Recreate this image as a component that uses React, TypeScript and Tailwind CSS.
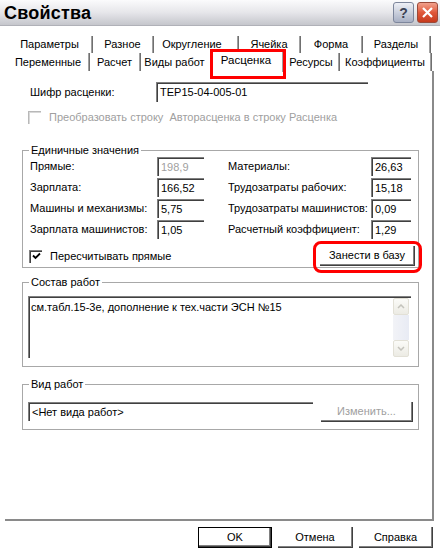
import React from "react";

const sunken =
  "bg-white border-t border-l border-t-[#808080] border-l-[#808080] shadow-[inset_1px_1px_0_#404040]";
const raised =
  "bg-white border-r border-b border-r-[#404040] border-b-[#404040] shadow-[inset_-1px_-1px_0_#808080]";

function Tab({ label, className, text = "", sep = true }: { label: string; className: string; text?: string; sep?: boolean }) {
  return (
    <div className={"flex h-full " + className}>
      <div className={"flex flex-1 items-center justify-center " + text}>{label}</div>
      {sep ? <div className="w-[2px] h-full border-l border-l-[#a0a0a0] border-r border-r-[#707070]" /> : <div className="w-[2px]" />}
    </div>
  );
}

function Edit({ value, className, disabled = false }: { value: string; className: string; disabled?: boolean }) {
  return (
    <div className={sunken + " flex items-center pl-[3px] " + className + (disabled ? " text-[#a0a0a0]" : " text-black")}>
      {value}
    </div>
  );
}

function Row({ l1, v1, l2, v2, d1 = false }: { l1: string; v1: string; l2: string; v2: string; d1?: boolean }) {
  return (
    <div className="flex h-[19px] items-center">
      <div className="w-[134px] pl-[7px]">{l1}</div>
      <Edit value={v1} className="w-[47px] h-[19px]" disabled={d1} />
      <div className="w-[24px]" />
      <div className="w-[143px]">{l2}</div>
      <Edit value={v2} className="w-[40px] h-[19px]" />
    </div>
  );
}

function Checkbox({ checked, disabled }: { checked?: boolean; disabled?: boolean }) {
  return (
    <div
      className={
        "w-[13px] h-[13px] bg-white flex items-center justify-center " +
        (disabled
          ? "border-t border-l border-t-[#b8b8b8] border-l-[#b8b8b8] shadow-[inset_1px_1px_0_#d8d8d8]"
          : "border-t border-l border-t-[#808080] border-l-[#808080] shadow-[inset_1px_1px_0_#404040]")
      }
    >
      {checked && (
        <svg width="9" height="9" viewBox="0 0 9 9">
          <path d="M1 3.5 L3.5 6 L8 1.5" stroke="#000" strokeWidth="1.8" fill="none" />
        </svg>
      )}
    </div>
  );
}

export default function App() {
  return (
    <div className="w-[440px] h-[558px] bg-white overflow-hidden font-['Liberation_Sans',Arial,sans-serif] text-[11px] text-black leading-none">
      {/* title bar */}
      <div className="h-[26px] flex items-center justify-between bg-gradient-to-b from-[#fbfbfc] via-[#e6e6ea] to-[#c5c6cc] border-b border-b-[#b0b1b8]">
        <div className="pl-[4px] text-[18px] font-bold tracking-[0.2px] text-black">Свойства</div>
        <div className="flex gap-[3px] pr-[2px]">
          <div className="w-[21px] h-[21px] rounded-[3px] border border-[#7d869c] bg-gradient-to-b from-[#eef0f6] to-[#a8b0c4] flex items-center justify-center text-[14px] font-bold text-[#3b4254]">
            ?
          </div>
          <div className="w-[21px] h-[21px] rounded-[3px] border border-[#9a4a3a] bg-gradient-to-b from-[#f0a08c] via-[#e0583a] to-[#c63a1c] flex items-center justify-center">
            <svg width="13" height="13" viewBox="0 0 13 13">
              <path d="M2 2 L11 11 M11 2 L2 11" stroke="#fff" strokeWidth="2.2" />
            </svg>
          </div>
        </div>
      </div>

      {/* tabs */}
      <div className="mt-[10px] pl-[8px]">
        <div className="flex h-[17px]">
          <Tab label="Параметры" className="w-[85px]" />
          <Tab label="Разное" className="w-[61px]" />
          <Tab label="Округление" className="w-[85px]" text="pr-[7px]" />
          <Tab label="Ячейка" className="w-[62px]" />
          <Tab label="Форма" className="w-[62px]" />
          <Tab label="Разделы" className="w-[68px]" />
        </div>
        <div className="flex h-[18px]">
          <Tab label="Переменные" className="w-[82px]" />
          <Tab label="Расчет" className="w-[51px]" />
          <Tab label="Виды работ" className="w-[69px]" sep={false} />
          <div className="relative flex w-[74px] -mt-[3px] h-[28px] bg-white">
            <div className="flex flex-1 items-start justify-center pt-[5px] text-[11.5px]">Расценка</div>
            <div className="w-[2px] h-[22px] border-l border-l-[#a0a0a0] border-r border-r-[#707070]" />
            <div className="absolute left-[0px] -right-[2px] -top-[1px] bottom-[-1px] border-[3px] border-[#ff0000]" />
          </div>
          <Tab label="Ресурсы" className="w-[56px]" />
          <Tab label="Коэффициенты" className="w-[92px]" />
        </div>
      </div>

      {/* panel */}
      <div className="ml-[5px] w-[429px] h-[450px] border-r-2 border-b-2 border-[#8a8a8a] pl-[17px] flex flex-col">
        <div className="mt-[11px] flex h-[20px] items-center">
          <div className="w-[134px] pl-[8px]">Шифр расценки:</div>
          <Edit value="ТЕР15-04-005-01" className="w-[212px] h-[20px]" />
        </div>
        <div className="mt-[8px] flex h-[14px] items-center pl-[6px] text-[#a0a0a0]">
          <Checkbox disabled />
          <span className="ml-[8px]">Преобразовать строку&nbsp; Авторасценка в строку Расценка</span>
        </div>

        {/* group 1 */}
        <div className="relative mt-[26px] w-[397px] h-[118px] border border-[#a8a8a8]">
          <div className="absolute -top-[6px] left-[6px] bg-white px-[2px]">Единичные значения</div>
          <div className="mt-[6px] flex flex-col gap-[2px]">
            <Row l1="Прямые:" v1="198,9" d1 l2="Материалы:" v2="26,63" />
            <Row l1="Зарплата:" v1="166,52" l2="Трудозатраты рабочих:" v2="15,18" />
            <Row l1="Машины и механизмы:" v1="5,75" l2="Трудозатраты машинистов:" v2="0,09" />
            <Row l1="Зарплата машинистов:" v1="1,05" l2="Расчетный коэффициент:" v2="1,29" />
          </div>
          <div className="mt-[7px] flex h-[20px] items-center justify-between pl-[6px] pr-[3px]">
            <div className="flex items-center">
              <Checkbox checked />
              <span className="ml-[8px]">Пересчитывать прямые</span>
            </div>
            <div className="relative">
              <div className={raised + " w-[95px] h-[20px] flex items-center justify-center"}>Занести в базу</div>
              <div className="absolute -left-[7px] -right-[7px] -top-[5px] -bottom-[7px] rounded-[8px] border-[3px] border-[#ff0000]" />
            </div>
          </div>
        </div>

        {/* group 2 */}
        <div className="relative mt-[14px] w-[397px] h-[85px] border border-[#a8a8a8]">
          <div className="absolute -top-[6px] left-[6px] bg-white px-[2px]">Состав работ</div>
          <div className={sunken + " ml-[5px] mt-[13px] w-[383px] h-[62px] flex"}>
            <div className="flex-1 pl-[2px] pt-[5px]">см.табл.15-3е, дополнение к тех.части ЭСН №15</div>
            <div className="w-[16px] mr-[2px] mt-[1px] mb-[1px] flex flex-col">
              <div className="h-[17px] rounded-[2px] border border-[#e2e0d6] bg-gradient-to-b from-[#fbfbf8] to-[#ecebe4] flex items-center justify-center">
                <svg width="8" height="5" viewBox="0 0 8 5">
                  <path d="M1 4 L4 1 L7 4" stroke="#c4c3bc" strokeWidth="1.5" fill="none" />
                </svg>
              </div>
              <div className="flex-1 bg-gradient-to-r from-[#f2f3f7] to-[#e8ebf4]" />
              <div className="h-[17px] rounded-[2px] border border-[#e2e0d6] bg-gradient-to-b from-[#fbfbf8] to-[#ecebe4] flex items-center justify-center">
                <svg width="8" height="5" viewBox="0 0 8 5">
                  <path d="M1 1 L4 4 L7 1" stroke="#c4c3bc" strokeWidth="1.5" fill="none" />
                </svg>
              </div>
            </div>
          </div>
        </div>

        {/* group 3 */}
        <div className="relative mt-[17px] w-[397px] h-[46px] border border-[#a8a8a8]">
          <div className="absolute -top-[6px] left-[6px] bg-white px-[2px]">Вид работ</div>
          <div className="mt-[17px] ml-[5px] flex items-start">
            <Edit value="<Нет вида работ>" className="w-[285px] h-[19px]" />
            <div className={raised + " ml-[8px] w-[92px] h-[20px] flex items-center justify-center text-[#a0a0a0]"}>Изменить...</div>
          </div>
        </div>
      </div>

      {/* footer */}
      <div className="mt-[6px] flex justify-end gap-[6px] pr-[7px]">
        <div className="w-[74px] h-[21px] border border-black shadow-[inset_-1px_-1px_0_#404040,inset_-2px_-2px_0_#808080] flex items-center justify-center">OK</div>
        <div className={raised + " w-[75px] h-[21px] flex items-center justify-center"}>Отмена</div>
        <div className={raised + " w-[74px] h-[21px] flex items-center justify-center"}>Справка</div>
      </div>
    </div>
  );
}
